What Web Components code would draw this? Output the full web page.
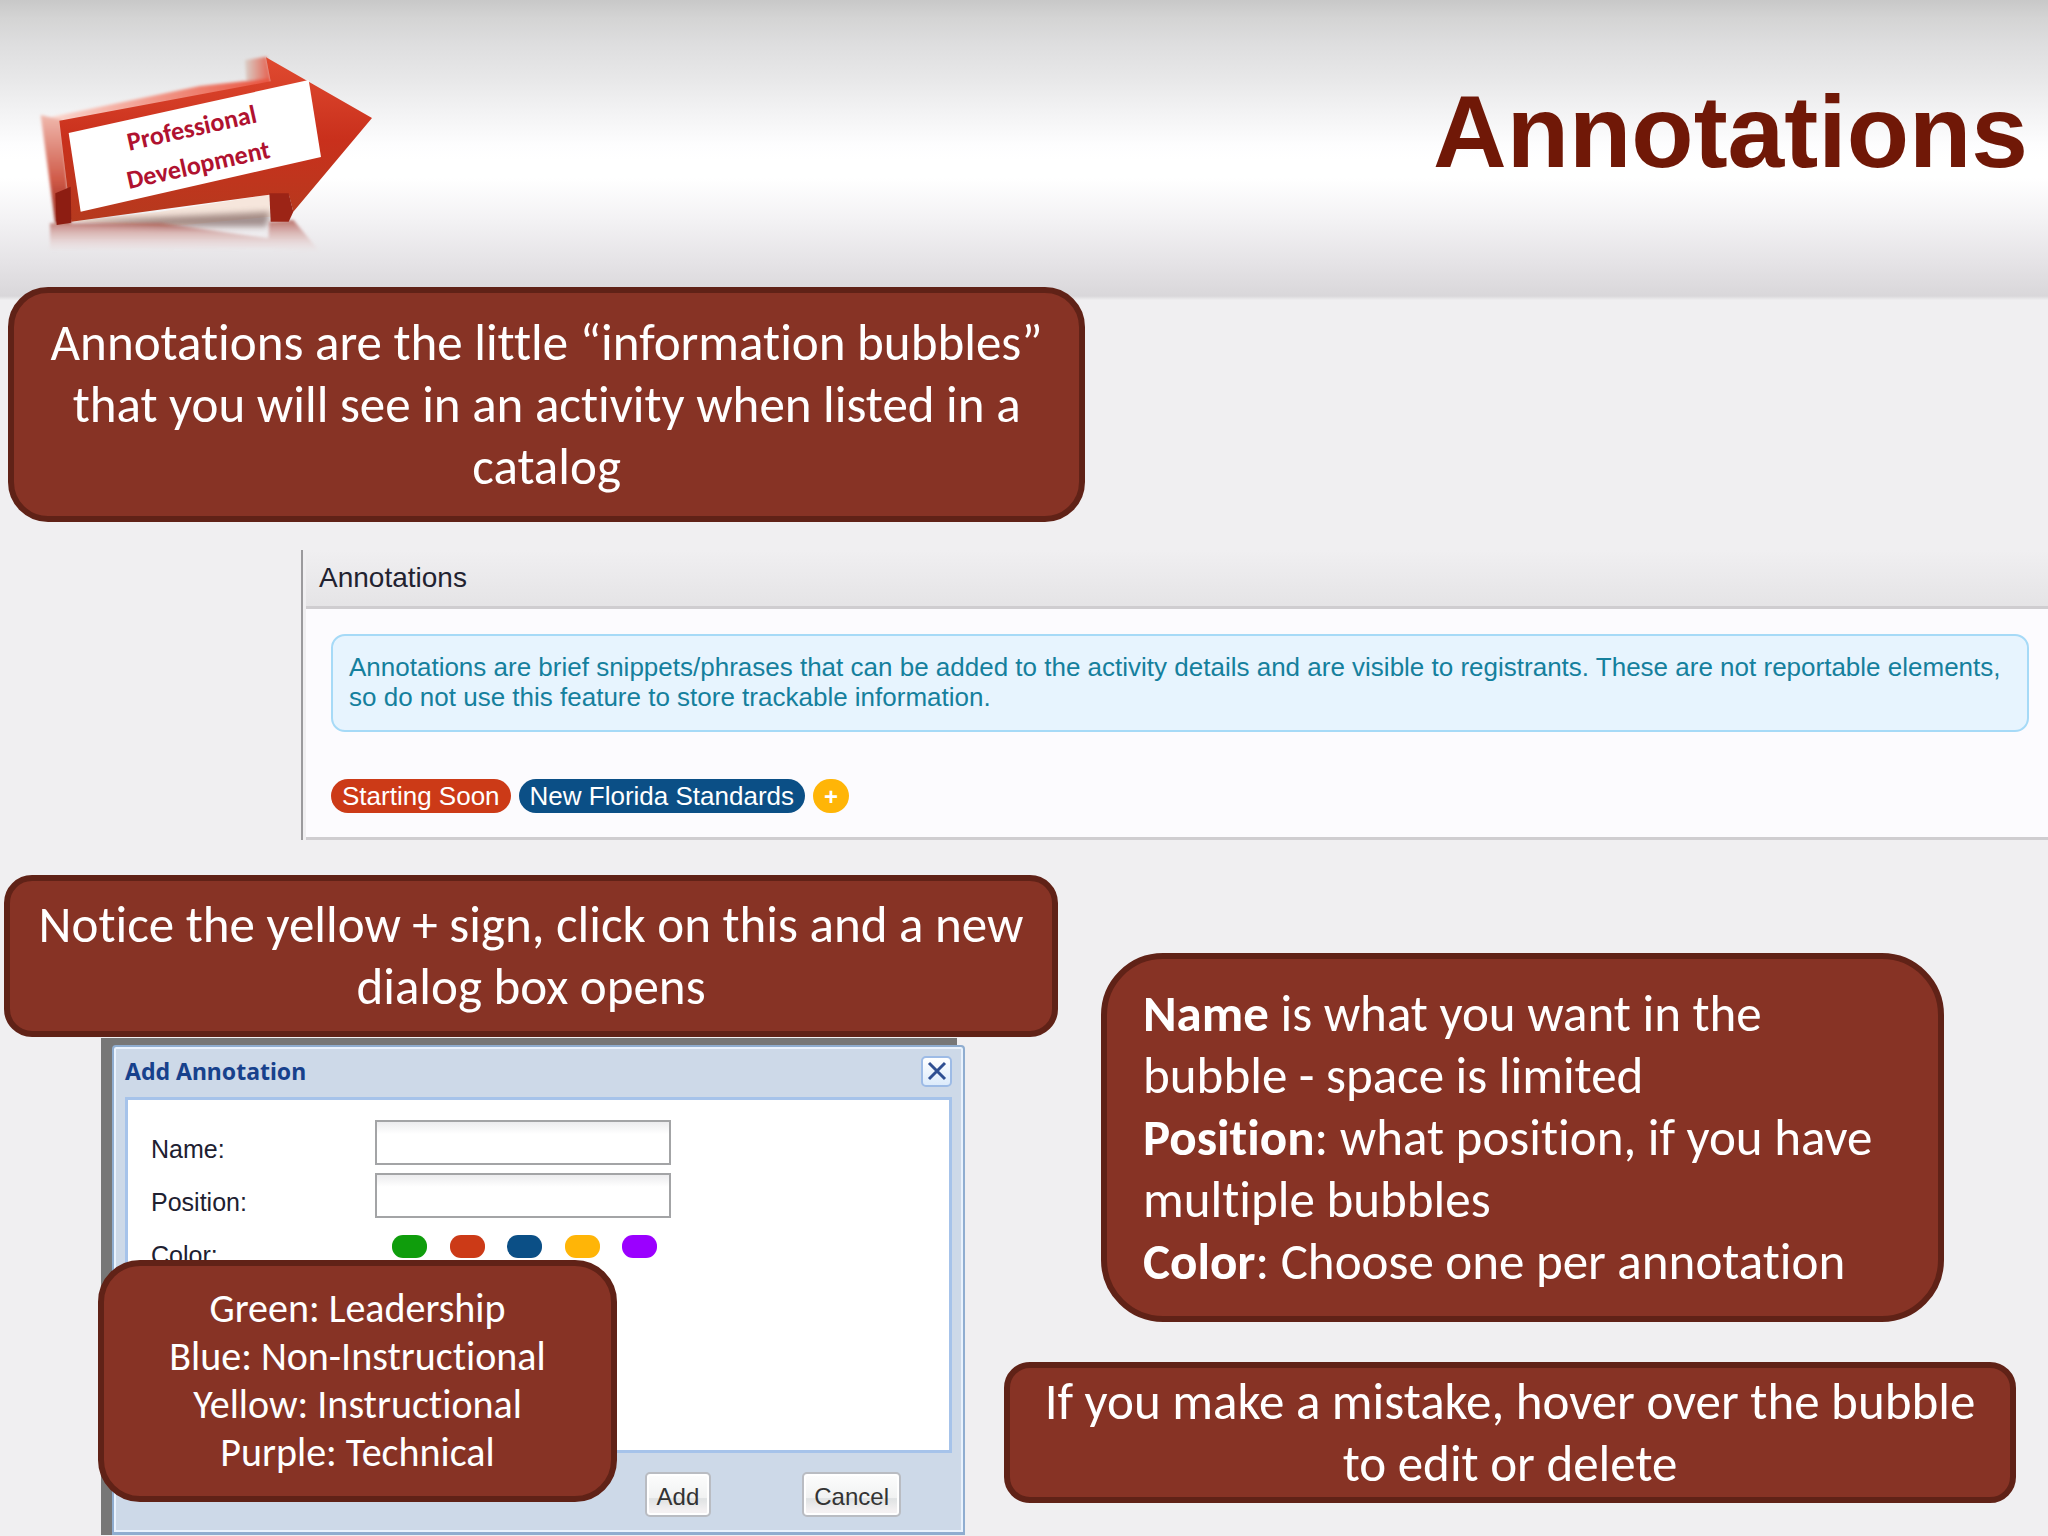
<!DOCTYPE html>
<html lang="en">
<head>
<meta charset="utf-8">
<title>Annotations</title>
<style>
  html, body { margin: 0; min-height: 100%; }
  body { background: #f0eff1; font-family: "Liberation Sans", Arial, sans-serif; overflow: hidden; }
</style>
</head>
<body>
<training-slide></training-slide>

<script>
const define = (name, html) => {
  const template = document.createElement('template');
  template.innerHTML = html;
  customElements.define(name, class extends HTMLElement {
    constructor() {
      super();
      this.attachShadow({ mode: 'open' }).append(template.content.cloneNode(true));
    }
  });
};

define('arrow-logo', `
<style>
  :host { display: block; flex: none; width: 420px; height: 260px; }
  svg { display: block; width: 100%; height: 100%; }
  text { font-family: Carlito, Calibri, Lato, sans-serif; font-weight: 700; font-size: 78px; fill: #b01230; font-variant-ligatures: none; }
</style>
<svg viewBox="0 0 1260 780" role="img" aria-label="Professional Development">
  <defs>
    <linearGradient id="face" x1="0" y1="0" x2="0" y2="1">
      <stop offset="0" stop-color="#e04a30"/><stop offset=".5" stop-color="#c9301c"/><stop offset="1" stop-color="#b53a1e"/>
    </linearGradient>
    <linearGradient id="side" x1="0" y1="0" x2="0" y2="1">
      <stop offset="0" stop-color="#f0b9ae"/><stop offset=".6" stop-color="#cf5a48"/><stop offset="1" stop-color="#8f1f14"/>
    </linearGradient>
    <linearGradient id="top" x1="0" y1="0" x2="1" y2="0">
      <stop offset="0" stop-color="#fbdcd4"/><stop offset="1" stop-color="#e8543f"/>
    </linearGradient>
    <linearGradient id="tip" x1="0" y1="0" x2="1" y2="0">
      <stop offset="0" stop-color="#d9cfc8"/><stop offset="1" stop-color="#e55a48"/>
    </linearGradient>
    <linearGradient id="mirror" x1="0" y1="0" x2="0" y2="1">
      <stop offset="0" stop-color="#a5443a" stop-opacity=".75"/><stop offset="1" stop-color="#e7b8b4" stop-opacity="0"/>
    </linearGradient>
    <filter id="soft" x="-10%" y="-10%" width="120%" height="120%"><feGaussianBlur stdDeviation="4"/></filter>
    <filter id="shade" x="-10%" y="-60%" width="120%" height="220%"><feGaussianBlur stdDeviation="9"/></filter>
  </defs>
  <path d="M214 575 L480 545 L808 494 L810 560 L500 590 Z" fill="#f6e6dc"/>
  <path d="M200 575 L810 545 L800 590 L500 590 Z" fill="#6d504c" opacity=".6" filter="url(#shade)"/>
  <path d="M150 580 L480 578 L805 625 L808 575 L880 570 L960 665 L800 655 L150 660 Z" fill="url(#mirror)" filter="url(#soft)"/>
  <g filter="url(#soft)">
    <path d="M735 90 L800 80 L815 160 L740 165 Z" fill="url(#tip)"/>
    <path d="M122 268 L600 168 L810 145 L810 165 L185 275 Z" fill="url(#top)"/>
    <path d="M122 255 L185 270 L212 580 L166 580 Z" fill="url(#side)"/>
  </g>
  <path d="M178 272 L812 154 L798 82 L1116 264 L880 545 L866 492 L808 494 L214 575 Z" fill="url(#face)"/>
  <path d="M808 490 L866 490 L880 545 L866 575 L812 575 Z" fill="#9c2416"/>
  <path d="M166 490 L212 470 L214 578 L170 585 Z" fill="#8d1d12"/>
  <path d="M206 309 L926 150 L963 381 L242 545 Z" fill="#fff"/>
  <text transform="translate(388 362) rotate(-12.5)">Professional</text>
  <text transform="translate(387 477) rotate(-12.5)">Development</text>
</svg>`);

define('slide-header', `
<style>
  :host { display: block; }
  header {
    display: flex; align-items: flex-start; justify-content: space-between;
    box-sizing: border-box; height: 300px; padding: 30px 20px 0 0;
    background: linear-gradient(#c8c8c8 0, #d4d4d4 18px, #dededf 45px, #e8e8e9 80px, #f2f2f3 110px, #fdfdfe 145px, #fff 160px, #fff 178px, #f3f2f4 220px, #e6e4e7 260px, #d9d7da 296px, #efeef0 300px);
  }
  h1 { margin: 44px 0 0; font: bold 102px/116px "Liberation Sans", Arial, sans-serif; color: #701807; }
</style>
<header><arrow-logo></arrow-logo><h1><slot></slot></h1></header>`);

define('call-out', `
<style>
  :host { display: block; }
  div {
    display: flex; flex-direction: column; justify-content: center; box-sizing: border-box; height: 100%;
    padding: var(--pad, 10px 24px); border: 6px solid #602217; border-radius: var(--radius, 28px);
    background: #873325; color: #fff; text-align: center;
    font: 51px/62px Carlito, Calibri, Lato, sans-serif; font-variant-ligatures: none;
  }
  :host([start]) div { text-align: left; }
  :host([small]) div { font-size: 40px; line-height: 48px; }
  ::slotted(p) { margin: 0; }
</style>
<div><slot></slot></div>`);

define('tag-pill', `
<style>
  :host { display: block; }
  button {
    display: block; height: 34px; padding: 0 11px; border: 0; border-radius: 17px;
    background: var(--tone); color: #fff; font: 26px/33px "Liberation Sans", Arial, sans-serif;
  }
  :host([add]) button { font-size: 24px; font-weight: 700; }
</style>
<button type="button"><slot></slot></button>`);

define('annotation-panel', `
<style>
  :host { display: block; }
  section { border-left: 2px solid #9b9a9d; padding-left: 3px; }
  h2 {
    margin: 0; padding: 10px 13px; border-bottom: 3px solid #cfcdd0;
    background: linear-gradient(#f0eff1, #e5e4e6); color: #222230; font-size: 28px; line-height: 36px; font-weight: 400;
  }
  .body { padding: 25px 19px 24px 25px; background: #fcfbfe; border-bottom: 3px solid #cfcdd0; }
  .note {
    margin: 0 0 47px; padding: 16px; border: 2px solid #a6daf7; border-radius: 14px;
    background: #e7f4fe; color: #15809d; font-size: 26px; line-height: 30px; min-height: 62px;
  }
  .tags { display: flex; gap: 8px; }
</style>
<section>
  <h2>Annotations</h2>
  <div class="body">
    <p class="note">Annotations are brief snippets/phrases that can be added to the activity details and are visible to registrants. These are not reportable elements, so do not use this feature to store trackable information.</p>
    <div class="tags">
      <tag-pill style="--tone:#cc3a17">Starting Soon</tag-pill>
      <tag-pill style="--tone:#0b4f86">New Florida Standards</tag-pill>
      <tag-pill add style="--tone:#ffb507">+</tag-pill>
    </div>
  </div>
</section>`);

define('add-dialog', `
<style>
  :host { display: block; }
  .shade { padding: 7px 0 0 11px; background: linear-gradient(#777, #777) no-repeat 0 0 / calc(100% - 8px) 100%; }
  form {
    display: flex; flex-direction: column; box-sizing: border-box; height: 490px; padding: 0 11px;
    border: 2px solid #8fadd0; border-bottom-width: 3px; border-radius: 4px 4px 0 0; background: #cdd9e8; box-shadow: inset 0 0 0 2px #e9f2fd;
  }
  .bar { display: flex; align-items: center; justify-content: space-between; box-sizing: border-box; height: 50px; padding-bottom: 2px; }
  h2 { margin: 0; font: bold 23px/32px "Noto Sans", sans-serif; color: #17418c; }
  .close { display: grid; place-items: center; width: 31px; height: 31px; padding: 0; border: 2px solid #9dbbe6; border-radius: 5px; background: linear-gradient(#fff, #dcebfb); }
  .fields {
    flex: 1; display: grid; grid-template-columns: 224px 296px; grid-auto-rows: 45px; row-gap: 8px; align-content: start; align-items: center;
    padding: 20px 23px; border: 3px solid #a6c3ea; background: #fff; font-size: 25px; line-height: 30px; color: #202030;
  }
  label, .label { padding-top: 12px; }
  input[type=text] {
    box-sizing: border-box; width: 100%; height: 45px; border: 2px solid #a3a4a6;
    background: linear-gradient(#ececee, #fff 12px); font-size: 25px; padding: 0 8px;
  }
  .colors { display: flex; justify-content: space-between; padding: 0 14px 0 17px; margin-top: -4px; }
  .colors input { appearance: none; margin: 0; width: 35px; height: 23px; border-radius: 11px; background: var(--tone); }
  .actions { display: flex; justify-content: flex-end; gap: 91px; padding: 19px 51px 15px 0; }
  .actions button {
    height: 45px; padding: 5px 10px 0; border: 2px solid #b9bcc2; border-radius: 5px; color: #333;
    background: linear-gradient(#fdfdfd 0, #f1f2f2 58%, #dfe2e3 60%, #f4f1f2 90%);
    font: 24px/28px "Liberation Sans", Arial, sans-serif;
    box-shadow: inset 0 0 0 2px #fff;
  }
</style>
<div class="shade">
  <form onsubmit="return false">
    <div class="bar">
      <h2>Add Annotation</h2>
      <button class="close" type="button" aria-label="Close">
        <svg width="20" height="20" viewBox="0 0 20 20"><path d="M2 2 L18 18 M18 2 L2 18" stroke="#2f4f92" stroke-width="3"/></svg>
      </button>
    </div>
    <div class="fields">
      <label for="name">Name:</label><input id="name" type="text">
      <label for="position">Position:</label><input id="position" type="text">
      <span class="label" id="color">Color:</span>
      <div class="colors" role="radiogroup" aria-labelledby="color">
        <input type="radio" name="c" aria-label="Green" style="--tone:#0f9d0c">
        <input type="radio" name="c" aria-label="Red" style="--tone:#cc3a17">
        <input type="radio" name="c" aria-label="Blue" style="--tone:#0b4f86">
        <input type="radio" name="c" aria-label="Yellow" style="--tone:#ffb507">
        <input type="radio" name="c" aria-label="Purple" style="--tone:#9b00ff">
      </div>
    </div>
    <div class="actions"><button type="button">Add</button><button type="button">Cancel</button></div>
  </form>
</div>`);

define('training-slide', `
<style>
  :host { display: block; }
  .intro { width: 52.6%; height: 235px; margin: -13px 0 28px 8px; --radius: 40px; }
  annotation-panel { margin: 0 0 35px 301px; }
  .lower { display: grid; grid-template-columns: 1004fr 54fr 990fr; align-items: start; }
  .left { grid-area: 1 / 1 / 2 / 3; }
  .right { grid-area: 1 / 2 / 2 / 4; padding: 78px 32px 0 0; }
  .notice { height: 162px; margin: 0 0 1px 4px; }
  .stage { position: relative; margin: 0 93px 0 101px; }
  .legend { position: absolute; left: -3px; top: 222px; width: 519px; height: 242px; --radius: 42px; --pad: 0 24px; }
  .fields { height: 369px; margin: 0 72px 40px 97px; --radius: 62px; --pad: 10px 36px; }
  .hover { height: 141px; --pad: 0 24px; --radius: 26px; }
</style>
<slide-header>Annotations</slide-header>
<main>
  <call-out class="intro"><p>Annotations are the little “information bubbles” that you will see in an activity when listed in a catalog</p></call-out>
  <annotation-panel></annotation-panel>
  <div class="lower">
    <div class="left">
      <call-out class="notice"><p>Notice the yellow + sign, click on this and a new dialog box opens</p></call-out>
      <div class="stage">
        <add-dialog></add-dialog>
        <call-out class="legend" small><p>Green: Leadership</p><p>Blue: Non-Instructional</p><p>Yellow: Instructional</p><p>Purple: Technical</p></call-out>
      </div>
    </div>
    <div class="right">
      <call-out class="fields" start>
        <p><b>Name</b> is what you want in the bubble - space is limited</p>
        <p><b>Position</b>: what position, if you have multiple bubbles</p>
        <p><b>Color</b>: Choose one per annotation</p>
      </call-out>
      <call-out class="hover"><p>If you make a mistake, hover over the bubble to edit or delete</p></call-out>
    </div>
  </div>
</main>`);
</script>
</body>
</html>
